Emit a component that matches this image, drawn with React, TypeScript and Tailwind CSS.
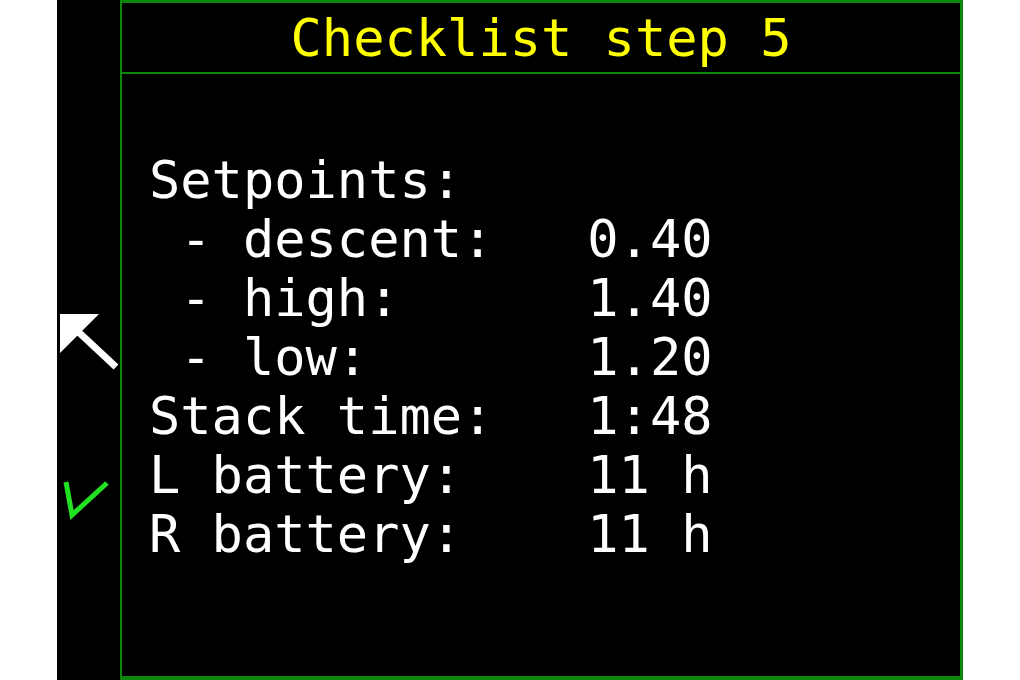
import React from "react";

const rows = [
  "Setpoints:",
  " - descent:   0.40",
  " - high:      1.40",
  " - low:       1.20",
  "Stack time:   1:48",
  "L battery:    11 h",
  "R battery:    11 h",
];

const mono = { fontFamily: '"DejaVu Sans Mono", "Liberation Mono", monospace' };

const App = () => {
  return (
    <div className="flex h-[680px] w-[1020px] bg-white overflow-hidden">
      <div className="w-[57px] shrink-0" />
      <div className="flex w-[63px] shrink-0 flex-col bg-black">
        <svg className="mt-[312px] ml-[2px]" width="60" height="58" viewBox="0 0 60 58">
          <polygon points="1,2 40,2 1,41" fill="#fff" />
          <line x1="12" y1="13" x2="57" y2="55" stroke="#fff" strokeWidth="7" />
        </svg>
        <svg className="mt-[110px] ml-[5px]" width="48" height="40" viewBox="0 0 48 40">
          <polyline
            points="4,2 10,35 45,3"
            fill="none"
            stroke="#22e022"
            strokeWidth="5"
            strokeLinejoin="miter"
          />
        </svg>
      </div>
      <div className="flex w-[843px] shrink-0 flex-col border-t-[3px] border-l-2 border-r-[3px] border-b-[4px] border-[#0c870c] bg-black">
        <div
          className="flex h-[71px] items-center justify-center border-b-2 border-[#0c870c] text-[52px] leading-none text-[#ffff00]"
          style={mono}
        >
          Checklist step 5
        </div>
        <div className="pt-[77px] pl-[27px] text-[52px] leading-[59px] text-white" style={mono}>
          {rows.map((r) => (
            <div key={r} className="whitespace-pre">
              {r}
            </div>
          ))}
        </div>
      </div>
    </div>
  );
};

export default App;
